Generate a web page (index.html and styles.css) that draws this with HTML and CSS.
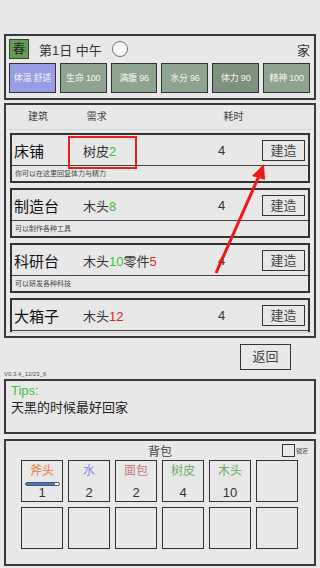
FILE: index.html
```html
<!DOCTYPE html>
<html lang="zh">
<head>
    <meta charset="UTF-8">
    <title>建造</title>
    <link rel="stylesheet" href="styles.css">
</head>
<body>

<div class="top_panel">
    <div class="day_row">
        <span class="season">春</span>
        <span class="day_text">第1日 中午</span>
        <span class="sun"></span>
        <span class="place">家</span>
    </div>
    <div class="stat_row">
        <div class="stat stat_temp">体温 舒适</div>
        <div class="stat">生命 100</div>
        <div class="stat">满腹 96</div>
        <div class="stat">水分 96</div>
        <div class="stat stat_dark">体力 90</div>
        <div class="stat">精神 100</div>
    </div>
</div>

<div class="build_panel">
    <div class="build_head">
        <span class="h_name">建筑</span>
        <span class="h_need">需求</span>
        <span class="h_time">耗时</span>
    </div>
    <div class="build_list">
        <div class="card">
            <div class="card_main">
                <span class="c_name">床铺</span>
                <span class="c_need">树皮<em class="ok">2</em></span>
                <span class="c_time">4</span>
                <span class="btn_build">建造</span>
            </div>
            <div class="card_desc">你可以在这里回复体力与精力</div>
        </div>
        <div class="card">
            <div class="card_main">
                <span class="c_name">制造台</span>
                <span class="c_need">木头<em class="ok">8</em></span>
                <span class="c_time">4</span>
                <span class="btn_build">建造</span>
            </div>
            <div class="card_desc">可以制作各种工具</div>
        </div>
        <div class="card">
            <div class="card_main">
                <span class="c_name">科研台</span>
                <span class="c_need">木头<em class="ok">10</em>零件<em class="bad">5</em></span>
                <span class="c_time">4</span>
                <span class="btn_build">建造</span>
            </div>
            <div class="card_desc">可以研发各种科技</div>
        </div>
        <div class="card">
            <div class="card_main">
                <span class="c_name">大箱子</span>
                <span class="c_need">木头<em class="bad">12</em></span>
                <span class="c_time">4</span>
                <span class="btn_build">建造</span>
            </div>
            <div class="card_desc"></div>
        </div>
    </div>
</div>

<div class="back_row">
    <span class="btn_back">返回</span>
</div>
<div class="version">V0.3.4_12/23_6</div>

<div class="tips_panel">
    <p class="tips_title">Tips:</p>
    <p class="tips_text">天黑的时候最好回家</p>
</div>

<div class="bag_panel">
    <div class="bag_head">
        <span class="bag_title">背包</span>
        <span class="lock"><span class="lock_box"></span>锁定</span>
    </div>
    <div class="bag_grid">
        <div class="slot"><span class="i_name axe">斧头</span><span class="dur"></span><span class="i_num">1</span></div>
        <div class="slot"><span class="i_name water">水</span><span class="i_num">2</span></div>
        <div class="slot"><span class="i_name bread">面包</span><span class="i_num">2</span></div>
        <div class="slot"><span class="i_name bark">树皮</span><span class="i_num">4</span></div>
        <div class="slot"><span class="i_name wood">木头</span><span class="i_num">10</span></div>
        <div class="slot"></div>
        <div class="slot"></div>
        <div class="slot"></div>
        <div class="slot"></div>
        <div class="slot"></div>
        <div class="slot"></div>
        <div class="slot"></div>
    </div>
</div>

<!--标注：红框和箭头-->
<div class="mark_box"></div>
<svg class="mark_arrow" width="320" height="568" viewBox="0 0 320 568">
    <line x1="216" y1="273" x2="259" y2="176" stroke="#f01818" stroke-width="3"/>
    <polygon points="264,164 252,176 265,180" fill="#f01818"/>
</svg>

</body>
</html>
```

FILE: styles.css
```css
*{
    margin: 0px;
    padding: 0px;
    box-sizing: border-box;
}
body{
    background-color: #e8e8e8;
    font-family: "Liberation Sans", "Noto Sans CJK SC", sans-serif;
    color: #333;
    padding-top: 34px;
    position: relative;
    width: 320px;
    height: 568px;
    overflow: hidden;
}

/*顶部状态*/
.top_panel{
    margin: 0 4px;
    height: 66px;
    border: 2px solid #3a3a3a;
    padding: 2px 4px 0 3px;
}
.day_row{
    display: flex;
    align-items: center;
    height: 22px;
}
.season{
    width: 20px;
    height: 20px;
    background-color: #669a58;
    border: 1px solid #2e4a28;
    color: #1e2e1a;
    font-size: 13px;
    line-height: 18px;
    text-align: center;
}
.day_text{
    margin-left: 10px;
    font-size: 13px;
}
.sun{
    margin-left: 10px;
    width: 16px;
    height: 16px;
    border-radius: 50%;
    background-color: #fafafa;
    border: 1px solid #777;
}
.place{
    margin-left: auto;
    font-size: 13px;
}
.stat_row{
    display: flex;
    gap: 4px;
    margin-top: 3px;
}
.stat{
    width: 47px;
    height: 30px;
    background-color: #8ea490;
    border: 1px solid #333;
    color: #f4f4f4;
    font-size: 9px;
    line-height: 28px;
    text-align: center;
    white-space: nowrap;
    letter-spacing: -0.2px;
}
.stat_temp{
    background-color: #979ee6;
}
.stat_dark{
    background-color: #7e917f;
}

/*建筑列表*/
.build_panel{
    margin: 3px 4px 0 4px;
    height: 235px;
    border: 2px solid #3a3a3a;
}
.build_head{
    height: 24px;
    font-size: 10px;
    line-height: 24px;
    color: #444;
}
.h_name{ margin-left: 22px; }
.h_need{ margin-left: 36px; }
.h_time{ margin-left: 114px; }
.build_list{
    height: 204px;
    overflow: hidden;
    border-top: 1px solid #d8d8d8;
    border-bottom: 1px solid #d0d0d0;
    padding: 3px 4px 0 4px;
}
.card{
    border: 2px solid #333;
    height: 50px;
    margin-bottom: 5px;
}
.card_main{
    display: flex;
    align-items: center;
    height: 31px;
    border-bottom: 1px solid #444;
}
.c_name{
    width: 71px;
    padding-left: 2px;
    font-size: 15px;
    color: #111;
}
.c_need{
    width: 135px;
    font-size: 13px;
}
.c_need em{
    font-style: normal;
}
.ok{ color: #36c236; }
.bad{ color: #e82222; }
.c_time{
    width: 44px;
    font-size: 13px;
}
.btn_build{
    width: 43px;
    height: 21px;
    border: 1px solid #333;
    font-size: 13px;
    line-height: 19px;
    text-align: center;
    color: #444;
}
.card_desc{
    font-size: 7px;
    line-height: 15px;
    height: 15px;
    padding-left: 3px;
    color: #444;
}

/*返回*/
.back_row{
    display: flex;
    justify-content: flex-end;
    padding: 6px 29px 0 0;
    height: 32px;
}
.btn_back{
    width: 51px;
    height: 26px;
    border: 1px solid #333;
    font-size: 13px;
    line-height: 24px;
    text-align: center;
    color: #444;
}
.version{
    font-size: 6px;
    color: #555;
    padding-left: 4px;
    height: 8px;
    line-height: 8px;
}

/*提示*/
.tips_panel{
    margin: 1px 4px 0 4px;
    height: 55px;
    border: 2px solid #3a3a3a;
    padding: 1px 0 0 5px;
}
.tips_title{
    color: #3cc23c;
    font-size: 13px;
    line-height: 17px;
}
.tips_text{
    font-size: 13px;
    line-height: 18px;
    color: #222;
}

/*背包*/
.bag_panel{
    margin: 5px 4px 0 4px;
    height: 127px;
    border: 2px solid #3a3a3a;
}
.bag_head{
    position: relative;
    height: 19px;
    text-align: center;
}
.bag_title{
    font-size: 12px;
    line-height: 22px;
    color: #444;
}
.lock{
    position: absolute;
    right: 6px;
    top: 3px;
    display: flex;
    align-items: center;
    font-size: 6px;
    color: #444;
}
.lock_box{
    width: 13px;
    height: 13px;
    border: 1px solid #333;
    margin-right: 1px;
}
.bag_grid{
    display: grid;
    grid-template-columns: repeat(6, 42px);
    grid-auto-rows: 42px;
    gap: 5px;
    padding-left: 15px;
}
.slot{
    border: 1px solid #333;
    display: flex;
    flex-direction: column;
    align-items: center;
    position: relative;
}
.i_name{
    font-size: 12px;
    line-height: 20px;
}
.i_num{
    position: absolute;
    bottom: 0;
    font-size: 13px;
    line-height: 17px;
    color: #333;
}
.dur{
    width: 35px;
    height: 4px;
    border-radius: 2px;
    background: linear-gradient(to right, #3a78e0 88%, #fff 88%);
    border: 1px solid #555;
    margin-top: 1px;
}
.axe{ color: #ec7a38; }
.water{ color: #8c8ce4; }
.bread{ color: #c47a7a; }
.bark{ color: #78ac6a; }
.wood{ color: #66ac66; }

/*标注*/
.mark_box{
    position: absolute;
    left: 68px;
    top: 136px;
    width: 69px;
    height: 33px;
    border: 2px solid #ee1c1c;
}
.mark_arrow{
    position: absolute;
    left: 0;
    top: 0;
}
```
